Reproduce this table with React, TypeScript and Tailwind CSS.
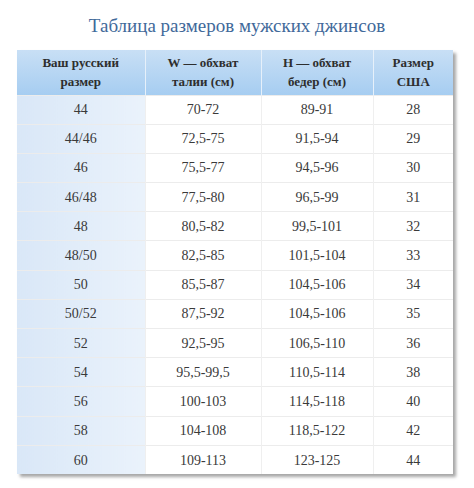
const rows: [string, string, string, string][] = [
  ["44", "70-72", "89-91", "28"],
  ["44/46", "72,5-75", "91,5-94", "29"],
  ["46", "75,5-77", "94,5-96", "30"],
  ["46/48", "77,5-80", "96,5-99", "31"],
  ["48", "80,5-82", "99,5-101", "32"],
  ["48/50", "82,5-85", "101,5-104", "33"],
  ["50", "85,5-87", "104,5-106", "34"],
  ["50/52", "87,5-92", "104,5-106", "35"],
  ["52", "92,5-95", "106,5-110", "36"],
  ["54", "95,5-99,5", "110,5-114", "38"],
  ["56", "100-103", "114,5-118", "40"],
  ["58", "104-108", "118,5-122", "42"],
  ["60", "109-113", "123-125", "44"],
];

const headers = [
  ["Ваш русский", "размер"],
  ["W — обхват", "талии (см)"],
  ["H — обхват", "бедер (см)"],
  ["Размер", "США"],
];

export default function App() {
  return (
    <div className="h-[488px] w-[474px] bg-white [font-family:'Liberation_Serif','Times_New_Roman',serif] text-[#3a3a3a]">
      <h1 className="pt-[13px] text-center text-[19px] leading-[26px] text-[#41699a]">
        Таблица размеров мужских джинсов
      </h1>
      <div className="ml-[17px] mt-[11px] w-[436px] shadow-[3px_3px_3px_rgba(0,0,0,0.35)]">
        <table className="w-full table-fixed border-collapse text-center">
          <colgroup>
            <col className="w-[128px]" />
            <col className="w-[116px]" />
            <col className="w-[112px]" />
            <col className="w-[80px]" />
          </colgroup>
          <thead>
            <tr className="h-[45px] bg-gradient-to-b from-[#c8dff5] to-[#a6cdf1]">
              {headers.map((h, i) => (
                <th
                  key={i}
                  className="border-l border-[#e6f0fa] text-[13px] font-bold leading-[19px] text-[#2e2e2e] first:border-l-0"
                >
                  {h[0]}
                  <br />
                  {h[1]}
                </th>
              ))}
            </tr>
          </thead>
          <tbody>
            {rows.map((r, i) => (
              <tr key={i} className="h-[29.2px] border-t border-[#ececec] text-[14px]">
                <td className="bg-gradient-to-r from-[#d9e7f7] to-[#eaf2fb]">{r[0]}</td>
                <td className="border-l border-[#efefef] bg-white">{r[1]}</td>
                <td className="border-l border-[#efefef] bg-white">{r[2]}</td>
                <td className="border-l border-[#efefef] bg-white">{r[3]}</td>
              </tr>
            ))}
          </tbody>
        </table>
      </div>
    </div>
  );
}
